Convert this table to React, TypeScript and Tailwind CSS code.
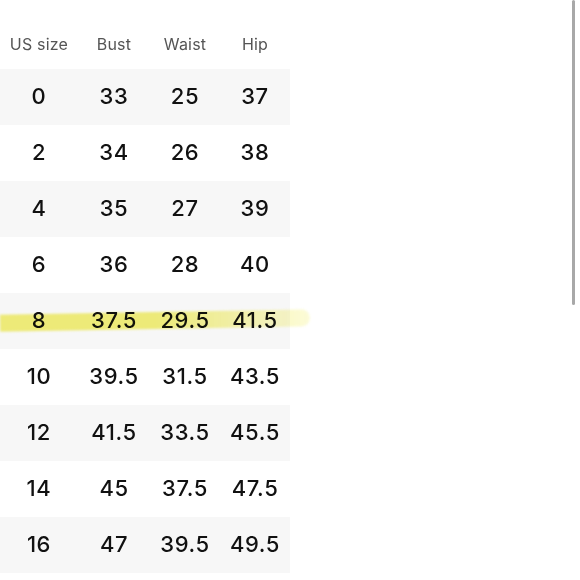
import React from 'react';

const rows = [
  ['0', '33', '25', '37'],
  ['2', '34', '26', '38'],
  ['4', '35', '27', '39'],
  ['6', '36', '28', '40'],
  ['8', '37.5', '29.5', '41.5'],
  ['10', '39.5', '31.5', '43.5'],
  ['12', '41.5', '33.5', '45.5'],
  ['14', '45', '37.5', '47.5'],
  ['16', '47', '39.5', '49.5'],
];

const cols = 'grid grid-cols-[78px_72px_70px_70px] w-[290px]';

export default function App() {
  return (
    <div className="relative w-[580px] h-[580px] overflow-hidden bg-white font-['Inter',sans-serif]">
      <div className={`${cols} h-[69px] items-center pt-[19px] text-[16px] text-[#555] tracking-[0.2px]`}>
        <div className="text-center">US size</div>
        <div className="text-center">Bust</div>
        <div className="text-center">Waist</div>
        <div className="text-center">Hip</div>
      </div>

      {rows.map((r, i) => (
        <div key={i} className={`${cols} h-[56px] items-center text-[22px] font-medium tracking-[0.6px] text-[#111] ${i % 2 === 0 ? 'bg-[#f7f7f7]' : 'bg-white'}`}>
          {r.map((v, j) => (
            <div key={j} className="text-center pb-[2px]">{v}</div>
          ))}
        </div>
      ))}

      {/* highlighter stroke over size 8 */}
      <div className="absolute left-0 top-[312px] w-[310px] h-[17px] bg-gradient-to-r from-[#f5f27c] via-[#f5f27c] to-[#f5f27c]/30 mix-blend-multiply rounded-r-full -rotate-[1deg] blur-[1px]" />

      {/* scroll indicator */}
      <div className="absolute right-[5px] top-0 w-[3px] h-[305px] rounded-full bg-[#a8a8a8]" />
    </div>
  );
}
